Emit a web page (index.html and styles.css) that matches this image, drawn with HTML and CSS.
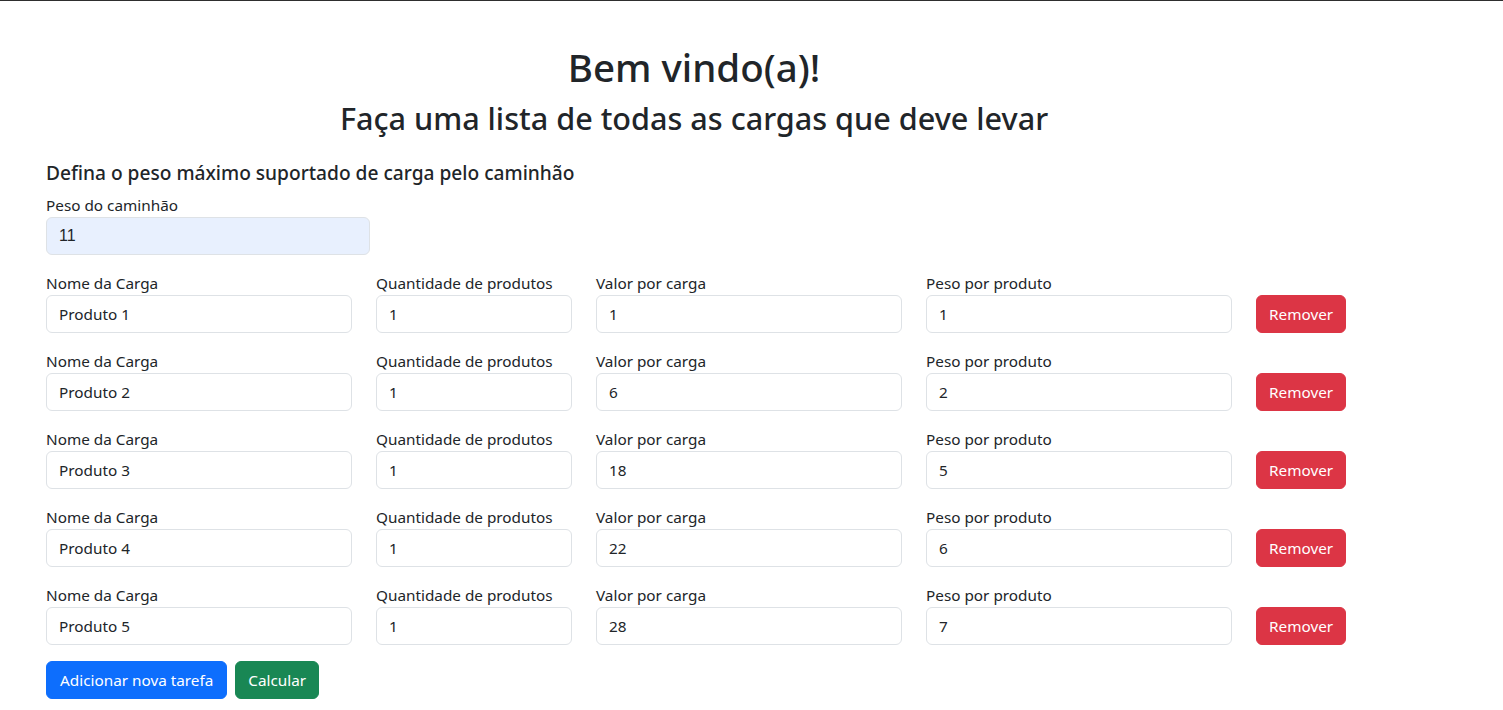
FILE: index.html
```html
<!DOCTYPE html>
<html lang="pt-BR">
<head>
<meta charset="utf-8">
<title>Cargas</title>
<link rel="stylesheet" href="styles.css">
</head>
<body>
<div class="page">
  <header class="intro">
    <h1 class="title">Bem vindo(a)!</h1>
    <h2 class="subtitle">Faça uma lista de todas as cargas que deve levar</h2>
  </header>

  <section class="truck">
    <h5 class="section-title">Defina o peso máximo suportado de carga pelo caminhão</h5>
    <div class="field truck-field">
      <label class="label">Peso do caminhão</label>
      <input class="input input-autofill" type="text" value="11">
    </div>
  </section>

  <section class="items">
    <div class="item">
      <div class="field"><label class="label">Nome da Carga</label><input class="input" type="text" value="Produto 1"></div>
      <div class="field"><label class="label">Quantidade de produtos</label><input class="input" type="text" value="1"></div>
      <div class="field"><label class="label">Valor por carga</label><input class="input" type="text" value="1"></div>
      <div class="field"><label class="label">Peso por produto</label><input class="input" type="text" value="1"></div>
      <button class="btn btn-danger" type="button">Remover</button>
    </div>
    <div class="item">
      <div class="field"><label class="label">Nome da Carga</label><input class="input" type="text" value="Produto 2"></div>
      <div class="field"><label class="label">Quantidade de produtos</label><input class="input" type="text" value="1"></div>
      <div class="field"><label class="label">Valor por carga</label><input class="input" type="text" value="6"></div>
      <div class="field"><label class="label">Peso por produto</label><input class="input" type="text" value="2"></div>
      <button class="btn btn-danger" type="button">Remover</button>
    </div>
    <div class="item">
      <div class="field"><label class="label">Nome da Carga</label><input class="input" type="text" value="Produto 3"></div>
      <div class="field"><label class="label">Quantidade de produtos</label><input class="input" type="text" value="1"></div>
      <div class="field"><label class="label">Valor por carga</label><input class="input" type="text" value="18"></div>
      <div class="field"><label class="label">Peso por produto</label><input class="input" type="text" value="5"></div>
      <button class="btn btn-danger" type="button">Remover</button>
    </div>
    <div class="item">
      <div class="field"><label class="label">Nome da Carga</label><input class="input" type="text" value="Produto 4"></div>
      <div class="field"><label class="label">Quantidade de produtos</label><input class="input" type="text" value="1"></div>
      <div class="field"><label class="label">Valor por carga</label><input class="input" type="text" value="22"></div>
      <div class="field"><label class="label">Peso por produto</label><input class="input" type="text" value="6"></div>
      <button class="btn btn-danger" type="button">Remover</button>
    </div>
    <div class="item">
      <div class="field"><label class="label">Nome da Carga</label><input class="input" type="text" value="Produto 5"></div>
      <div class="field"><label class="label">Quantidade de produtos</label><input class="input" type="text" value="1"></div>
      <div class="field"><label class="label">Valor por carga</label><input class="input" type="text" value="28"></div>
      <div class="field"><label class="label">Peso por produto</label><input class="input" type="text" value="7"></div>
      <button class="btn btn-danger" type="button">Remover</button>
    </div>
  </section>

  <div class="actions">
    <button class="btn btn-primary" type="button">Adicionar nova tarefa</button>
    <button class="btn btn-success" type="button">Calcular</button>
  </div>
</div>
</body>
</html>
```
FILE: styles.css
```css
* { box-sizing: border-box; }

html, body { margin: 0; padding: 0; background: #fff; }

body {
  border-top: 1px solid #2e2e2e;
  font-family: "Noto Sans", sans-serif;
  font-size: 15.3px;
  line-height: 24px;
  color: #212529;
}

.page {
  width: 1296px;
  margin-left: 46px;
  padding-top: 42px;
}

.intro { text-align: center; }

.title {
  margin: 0 0 8px;
  font-size: 38.5px;
  line-height: 48px;
  font-weight: 500;
}

.subtitle {
  margin: 0;
  font-size: 30.6px;
  line-height: 38px;
  font-weight: 500;
}

.truck { margin-top: 24px; }

.section-title {
  margin: 0 0 8px;
  font-size: 19.15px;
  line-height: 24px;
  font-weight: 500;
}

.truck-field { width: 324px; }

.field {
  display: flex;
  flex-direction: column;
}

.label {
  display: block;
  line-height: 24px;
}

.input {
  display: block;
  width: 100%;
  height: 38px;
  padding: 6px 12px;
  font-family: "Noto Sans", sans-serif;
  font-size: 15.3px;
  line-height: 24px;
  color: #212529;
  background: #fff;
  border: 1px solid #dee2e6;
  border-radius: 6px;
  outline: none;
}

.input-autofill {
  background: #e8f0fe;
  font-family: "Liberation Sans", Arial, sans-serif;
  font-size: 16px;
}

.items {
  margin-top: 16px;
  display: flex;
  flex-direction: column;
  gap: 16px;
}

.item {
  display: grid;
  grid-template-columns: 306px 196px 306px 306px auto;
  column-gap: 24px;
  align-items: end;
  justify-items: start;
}

.item .field { width: 100%; }

.actions {
  margin-top: 16px;
  display: flex;
  gap: 8px;
}

.btn {
  display: inline-block;
  height: 38px;
  padding: 6px 12px;
  font-family: "Noto Sans", sans-serif;
  font-size: 15.3px;
  line-height: 24px;
  color: #fff;
  border: 1px solid transparent;
  border-radius: 6px;
  cursor: pointer;
  white-space: nowrap;
}

.btn-primary { padding: 6px 13px; }

.btn-danger { background: #dc3545; border-color: #dc3545; }
.btn-primary { background: #0d6efd; border-color: #0d6efd; }
.btn-success { background: #198754; border-color: #198754; }
```
